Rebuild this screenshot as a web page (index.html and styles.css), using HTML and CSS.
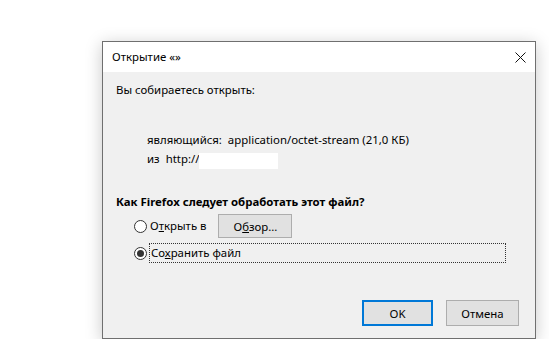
FILE: index.html
```html
<!DOCTYPE html>
<html lang="ru">
<head>
    <meta charset="UTF-8">
    <title>Открытие «»</title>
    <link rel="stylesheet" href="styles.css">
</head>
<body>
    <div class="screen">
        <div class="dialog">
            <!-- Title bar -->
            <div class="titlebar">
                <span class="title">Открытие «»</span>
                <svg class="close" width="11" height="11" viewBox="0 0 11 11">
                    <path d="M0.5 0.5 L10.5 10.5 M10.5 0.5 L0.5 10.5" stroke="#111" stroke-width="1" fill="none"/>
                </svg>
            </div>

            <div class="content">
                <p class="intro">Вы собираетесь открыть:</p>

                <div class="info">
                    <div class="info-line"><span class="info-label">являющийся:</span>application/octet-stream (21,0 КБ)</div>
                    <div class="info-line"><span class="info-label">из</span>http://<span class="hidden-url"></span></div>
                </div>

                <p class="question">Как Firefox следует обработать этот файл?</p>

                <div class="option option-open">
                    <span class="radio"></span>
                    <span class="option-label">О<u>т</u>крыть в</span>
                    <button type="button" class="btn btn-browse">О<u>б</u>зор...</button>
                </div>
                <div class="option option-save">
                    <span class="radio checked"></span>
                    <span class="option-label focused">Со<u>х</u>ранить файл</span>
                </div>
            </div>

            <div class="actions">
                <button type="button" class="btn btn-ok">OK</button>
                <button type="button" class="btn">Отмена</button>
            </div>
        </div>
    </div>
</body>
</html>
```

FILE: styles.css
```css
body {
    margin: 0;
    padding: 0;
    background-color: #ffffff;
    font-family: "Noto Sans", "Open Sans", sans-serif;
    font-size: 11.4px;
    color: #000000;
}

.screen {
    padding: 41px 0 0 102px;
}

.dialog {
    width: 434px;
    height: 298px;
    box-sizing: border-box;
    border: 1px solid #6f6f6f;
    background-color: #f0f0f0;
    box-shadow: 0 3px 16px rgba(0, 0, 0, 0.22);
    display: flex;
    flex-direction: column;
}

.titlebar {
    height: 30px;
    background-color: #ffffff;
    display: flex;
    align-items: center;
    justify-content: space-between;
    padding: 0 9px 0 9px;
}

.title {
    line-height: 16px;
}

.content {
    padding: 0 13px;
}

.intro {
    margin: 10px 0 0 0;
    line-height: 16px;
}

.info {
    margin: 33px 0 0 31px;
}

.info-line {
    line-height: 18px;
    display: flex;
    align-items: center;
}

.info-label {
    margin-right: 6px;
}

.hidden-url {
    display: inline-block;
    width: 79px;
    height: 16px;
    background-color: #ffffff;
    margin-top: 4px;
}

.question {
    margin: 25px 0 0 0;
    line-height: 16px;
    font-weight: bold;
}

.option {
    display: flex;
    align-items: center;
    margin-left: 18px;
}

.option-open {
    margin-top: 4px;
    height: 24px;
}

.option-save {
    margin-top: 5px;
    height: 20px;
}

.radio {
    width: 13px;
    height: 13px;
    box-sizing: border-box;
    border: 1px solid #333333;
    border-radius: 50%;
    background-color: #ffffff;
    display: flex;
    align-items: center;
    justify-content: center;
}

.radio.checked::after {
    content: "";
    width: 7px;
    height: 7px;
    border-radius: 50%;
    background-color: #333333;
}

.option-label {
    margin-left: 3px;
    line-height: 16px;
}

.option-label.focused {
    margin-left: 2px;
    width: 354px;
    height: 18px;
    border: 1px dotted #333333;
    padding-left: 1px;
    line-height: 18px;
}

.btn {
    font-family: inherit;
    font-size: 11.4px;
    color: #000000;
    background-color: #e1e1e1;
    border: 1px solid #adadad;
    padding: 0;
    width: 73px;
    height: 26px;
}

.btn-browse {
    margin-left: 12px;
    width: 74px;
    height: 24px;
}

.btn-ok {
    width: 71px;
    border: 2px solid #0078d7;
}

.actions {
    margin-top: auto;
    display: flex;
    justify-content: flex-end;
    gap: 13px;
    padding: 0 16px 12px 0;
}
```
